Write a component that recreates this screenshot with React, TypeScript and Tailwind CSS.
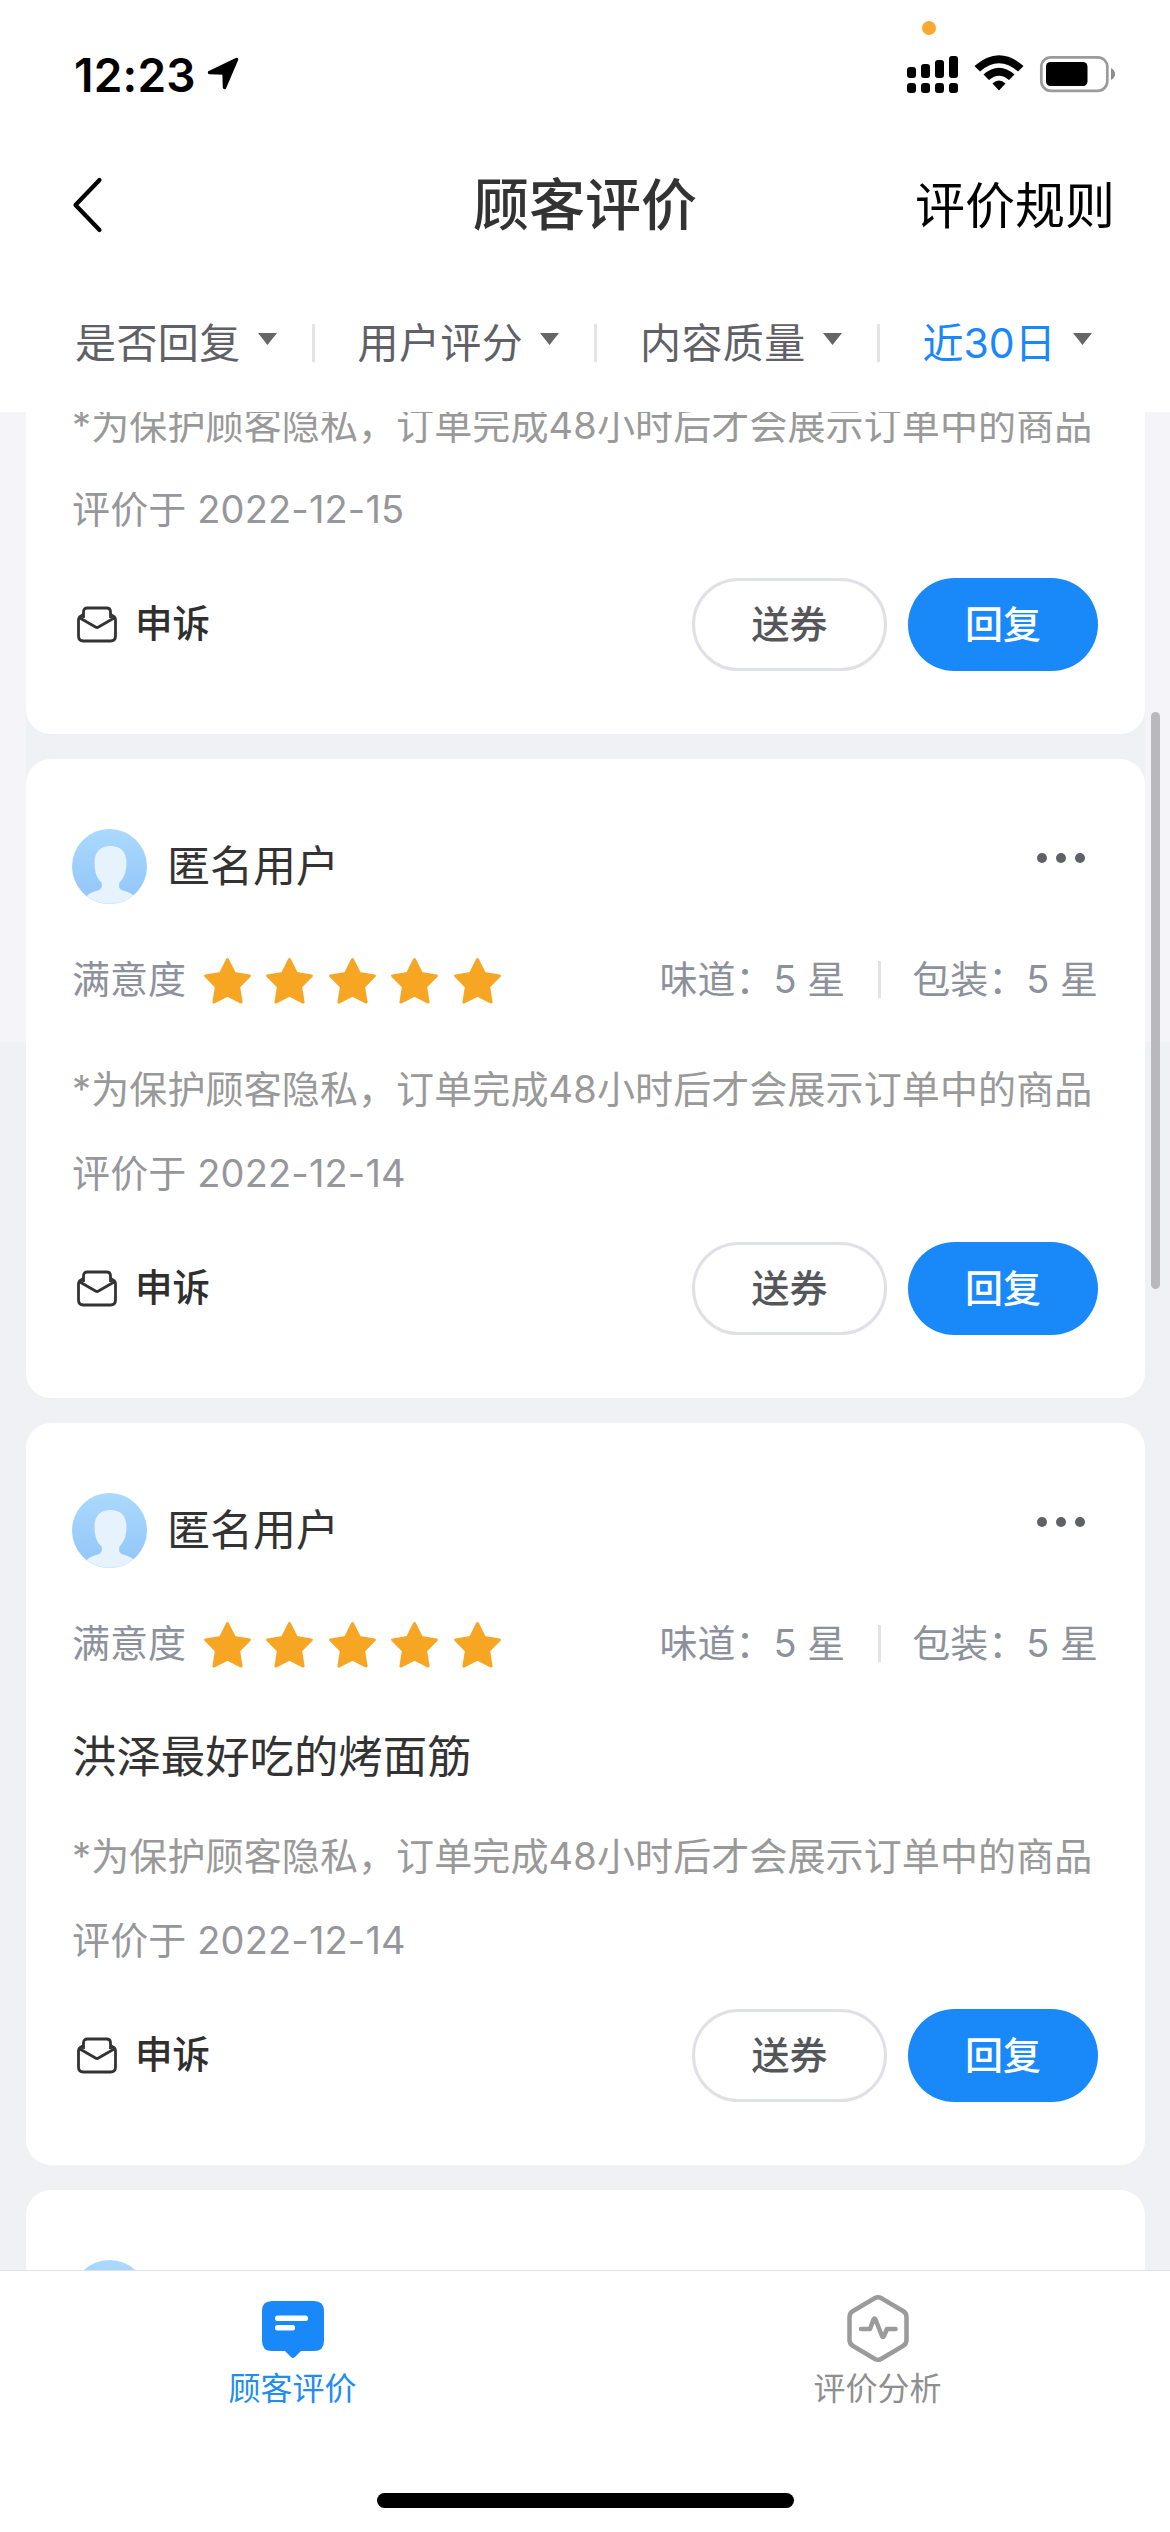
import React from "react";

type Review = {
  date: string;
  comment?: string;
  partial?: boolean;
};

const reviews: Review[] = [
  { date: "2022-12-15", partial: true },
  { date: "2022-12-14" },
  { date: "2022-12-14", comment: "洪泽最好吃的烤面筋" },
];

function StatusBar() {
  return (
    <div className="relative flex h-[140px] items-start justify-between pl-[74px] pr-[55px] pt-[54px]">
      <div className="flex items-start">
        <span className="h-[42px] w-[133px] whitespace-nowrap text-[46px] font-semibold leading-[42px] tracking-[0.2px] text-black">12:23</span>
        <svg className="mt-[3px]" width="33" height="34" viewBox="0 0 33 34">
          <path d="M29.5 2.5 L17.5 30.5 L17 16 L2.5 15.5 Z" fill="#000" stroke="#000" strokeWidth="3.4" strokeLinejoin="round" />
        </svg>
      </div>
      <span className="absolute left-[922px] top-[21px] size-[14px] rounded-full bg-[#fda92f]" />
      <svg width="210" height="40" viewBox="905 54 210 40">
        {[0, 1, 2, 3].map((i) => {
          const tops = [67, 64, 60, 56];
          return (
            <g key={i}>
              <rect x={907 + i * 14} y={tops[i]} width="9" height={78 - tops[i]} rx="3" />
              <rect x={907 + i * 14} y="83" width="9" height="10" rx="3" />
            </g>
          );
        })}
        <path d="M974.5 66 Q999 44.500 1023.500 66 L1018 71.500 Q999 55 980 71.500 Z" />
        <path d="M983.500 74.500 Q999 61 1014.500 74.500 L1009 80 Q999 71.500 989 80 Z" />
        <path d="M992.500 83.500 Q999 77.500 1005.500 83.500 L999 90.500 Z" />
        <rect x="1041.300" y="57.300" width="66" height="33.500" rx="9.500" fill="none" stroke="#9b9b9b" strokeWidth="2.700" />
        <rect x="1046" y="62" width="41.500" height="24" rx="4.500" />
        <path d="M1111 68 Q1115.500 70.500 1115 74 Q1115.500 77.500 1111 80 Z" fill="#8d8d8d" />
      </svg>
    </div>
  );
}

function TitleBar() {
  return (
    <div className="grid h-[130px] grid-cols-3 items-center pl-[72px] pr-[55px]">
      <svg width="32" height="56" viewBox="0 0 32 56" fill="none">
        <path d="M27.500 3 L3.500 28 L27.500 53" stroke="#000" strokeWidth="4.200" strokeLinecap="round" strokeLinejoin="round" />
      </svg>
      <h1 className="-ml-[17px] whitespace-nowrap text-center text-[56px] font-medium leading-[60px] text-[#333]">顾客评价</h1>
      <span className="whitespace-nowrap pt-[2px] text-right text-[50px] leading-[60px] text-black">评价规则</span>
    </div>
  );
}

function Filters() {
  const items = ["是否回复", "用户评分", "内容质量", "近30日"];
  return (
    <div className="flex h-[142px] items-start pl-8 pt-[54px]">
      {items.map((label, i) => (
        <div key={label} className="flex h-[38px] w-[282.5px] items-center justify-between">
          <div className="flex items-center gap-[17px] pl-[43px]">
            <span className={i === 3 ? "whitespace-nowrap text-[41px] leading-[56px] text-[#1888fb]" : "whitespace-nowrap text-[41px] leading-[56px] tracking-[0.4px] text-[#5f6167]"}>
              {label}
            </span>
            <svg className="mb-[8px]" width="19" height="12" viewBox="0 0 19 12">
              <path d="M0 0H19L9.500 12Z" fill="#666" />
            </svg>
          </div>
          {i < 3 && <span className="h-[38px] w-[3px] bg-[#e4e4e6]" />}
        </div>
      ))}
    </div>
  );
}

function Avatar() {
  return (
    <svg className="shrink-0" width="75" height="75" viewBox="0 0 75 75">
      <defs>
        <linearGradient id="sky" x1="0" y1="0" x2="0" y2="1">
          <stop offset="0" stopColor="#abd9fe" />
          <stop offset="1" stopColor="#90c5f8" />
        </linearGradient>
        <clipPath id="disc">
          <circle cx="37.500" cy="37.500" r="37.500" />
        </clipPath>
      </defs>
      <g clipPath="url(#disc)">
        <rect width="75" height="75" fill="url(#sky)" />
        <path
          d="M38.500 17 C48 17 54.500 22 54.500 34 C54.500 44 51 50 47.500 53.500 C46.500 58 47 60 51 61.500 C56 63 60 64 63 69 L63 75 H13 L14 68 C17 64 21 63 26 61.500 C30 60 30.500 57 29.500 53.500 C25.500 50 22.500 44 22.500 34 C22.500 22 29 17 38.500 17 Z"
          fill="#e6f3fc"
        />
        <path d="M14 69 Q37 79 62 69 V75 H14 Z" fill="#d3e8fa" />
      </g>
    </svg>
  );
}

function Stars() {
  return (
    <div className="flex gap-[13.4px] pt-[4px]">
      {[1, 2, 3, 4, 5].map((n) => (
        <svg key={n} width="49" height="48" viewBox="0 0 49 48">
          <path
            d="M24.500 2.500 L31.500 16.500 L46.500 18.800 L35.700 29.800 L38.200 45.200 L24.500 38.200 L10.800 45.200 L13.300 29.800 L2.500 18.800 L17.500 16.500 Z"
            fill="#f6a623"
            stroke="#f6a623"
            strokeWidth="2.800"
            strokeLinejoin="round"
          />
        </svg>
      ))}
    </div>
  );
}

function Ratings() {
  return (
    <div className="mt-[47px] flex h-14 items-center justify-between text-[38px] leading-[56px] text-[#8d919c]">
      <div className="flex items-center gap-[17px]">
        <span className="whitespace-nowrap">满意度</span>
        <Stars />
      </div>
      <div className="flex items-center whitespace-nowrap">
        <span>味道：5 星</span>
        <span className="ml-[33px] mr-[31px] h-[37px] w-[3px] bg-[#e1e3e6]" />
        <span>包装：5 星</span>
      </div>
    </div>
  );
}

function Actions() {
  return (
    <div className="mt-[41px] flex h-[93px] items-center text-[38px] font-medium leading-[56px]">
      <svg className="ml-[5px]" width="40" height="38" viewBox="0 0 40 38" fill="none" stroke="#333" strokeWidth="2.800" strokeLinejoin="round">
        <path d="M6.500 12 V6 Q6.500 2 10.500 2 H29.500 Q33.500 2 33.500 6 V12" />
        <path d="M6.500 8.500 L2.500 11 Q1.500 12 1.500 14 V30 Q1.500 35 6.500 35 H33.500 Q38.500 35 38.500 30 V14 Q38.500 12 37.500 11 L33.500 8.500" />
        <path d="M2 11.500 L18.500 21 Q20 22 21.500 21 L38 11.500" />
      </svg>
      <span className="ml-[18px] flex-1 whitespace-nowrap pb-[2px] text-[37.5px] text-[#2f2f2f]">申诉</span>
      <button className="flex h-[93px] w-[195px] items-center justify-center rounded-full border-[3px] border-[#e0e0e7] pb-[2px] text-[#55565a]">送券</button>
      <button className="ml-[21px] flex h-[93px] w-[190px] items-center justify-center rounded-full bg-[#1989fa] pb-[2px] text-white">回复</button>
    </div>
  );
}

function Note({ date }: { date: string }) {
  return (
    <>
      <p className="h-14 whitespace-nowrap text-[38px] leading-[56px] tracking-[0.12px] text-[#999]">*为保护顾客隐私，订单完成48小时后才会展示订单中的商品</p>
      <p className="mt-7 h-14 whitespace-nowrap text-[38px] leading-[56px] tracking-[0.14px] text-[#96979b]">评价于 {date}</p>
    </>
  );
}

function ReviewCard({ review }: { review: Review }) {
  if (review.partial) {
    return (
      <article className="rounded-b-[25px] bg-white pb-[63px] pl-[46px] pr-[47px]">
        <Note date={review.date} />
        <Actions />
      </article>
    );
  }
  return (
    <article className="rounded-[25px] bg-white pb-[63px] pl-[46px] pr-[47px] pt-[70px]">
      <div className="flex h-[75px] items-center">
        <Avatar />
        <span className="ml-5 flex-1 whitespace-nowrap pb-[2px] text-[43px] leading-[56px] text-[#333]">匿名用户</span>
        <div className="mb-[17px] mr-[13px] flex gap-[9px]">
          <span className="size-[10px] rounded-full bg-[#606166]" />
          <span className="size-[10px] rounded-full bg-[#606166]" />
          <span className="size-[10px] rounded-full bg-[#606166]" />
        </div>
      </div>
      <Ratings />
      {review.comment ? (
        <p className="mb-[43px] mt-[58px] h-14 whitespace-nowrap text-[44.4px] leading-[56px] text-[#333]">{review.comment}</p>
      ) : (
        <div className="h-[54px]" />
      )}
      <Note date={review.date} />
      <Actions />
    </article>
  );
}

function TabBar() {
  return (
    <nav className="h-[262px] border-t border-[#dfe2e6] bg-white">
      <div className="grid grid-cols-2 pt-[23px] text-[32px] leading-[40px]">
        <div className="flex flex-col items-center">
          <svg width="64" height="70" viewBox="0 0 64 70">
            <path
              d="M11 7 H53 Q63 7 63 17 V47 Q63 57 53 57 H40 L34 63 Q32 65 30 63 L24 57 H11 Q1 57 1 47 V17 Q1 7 11 7 Z"
              fill="#1989fa"
            />
            <rect x="14" y="21.500" width="33" height="5.600" rx="2.500" fill="#fff" />
            <rect x="14" y="31" width="20" height="5.600" rx="2.500" fill="#fff" />
          </svg>
          <span className="mt-[5px] text-[#1f8ef0]">顾客评价</span>
        </div>
        <div className="flex flex-col items-center">
          <svg width="64" height="70" viewBox="0 0 64 70" fill="none" stroke="#9b9b9b" strokeWidth="4.500" strokeLinecap="round" strokeLinejoin="round">
            <path d="M29 4 Q32 2.300 35 4 L57 17 Q60.500 19 60.500 23 V46 Q60.500 50 57 52 L35 65 Q32 66.700 29 65 L7 52 Q3.500 50 3.500 46 V23 Q3.500 19 7 17 Z" />
            <path d="M15 35 H24 L27.500 25.500 Q28.500 23.500 29.500 25.500 L36 42 Q37 44 38 42 L41 35 H49.500" />
          </svg>
          <span className="mt-[5px] text-[#8f8f8f]">评价分析</span>
        </div>
      </div>
      <div className="mx-auto mt-[84px] h-[15px] w-[417px] rounded-full bg-black" />
    </nav>
  );
}

export default function App() {
  return (
    <div className="flex h-[2532px] w-[1170px] flex-col overflow-hidden bg-white font-[Inter,'Noto_Sans_CJK_SC',sans-serif]">
      <header className="h-[412px] shrink-0 bg-white">
        <StatusBar />
        <TitleBar />
        <Filters />
      </header>
      <main className="relative h-[1858px] shrink-0 overflow-hidden bg-[linear-gradient(to_bottom,#f4f4f9_630px,#eff1f4_630px)] pl-[26px] pr-[25px]">
        <div className="-mt-[15px] flex flex-col gap-[25px] bg-[#eff1f4]">
          {reviews.map((review, i) => (
            <ReviewCard key={i} review={review} />
          ))}
          <article className="h-[200px] rounded-t-[25px] bg-white pl-[46px] pt-[70px]">
            <Avatar />
          </article>
        </div>
        <span className="absolute right-[10px] top-[300px] h-[577px] w-[9px] rounded-full bg-[#b9b9bd]" />
      </main>
      <TabBar />
    </div>
  );
}
